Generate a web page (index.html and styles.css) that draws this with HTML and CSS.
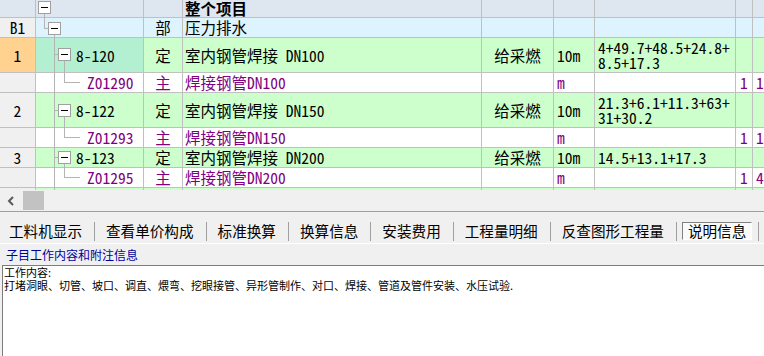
FILE: index.html
```html
<!DOCTYPE html>
<html>
<head>
<meta charset="utf-8">
<link rel="stylesheet" href="styles.css">
</head>
<body>
<div class="grid-wrap">
  <div class="row h18 hdr">
    <div></div><div></div><div></div><div class="l2 bold">整个项目</div><div></div><div></div><div></div><div></div><div></div>
  </div>
  <div class="row h20 grp">
    <div class="rh c">B1</div><div></div><div class="c">部</div><div class="l2">压力排水</div><div></div><div></div><div></div><div></div><div></div>
  </div>
  <div class="row h35 item">
    <div class="sel c">1</div><div class="code cur">8-120</div><div class="c">定</div><div class="l2">室内钢管焊接 DN100</div><div class="c">给采燃</div><div class="l3">10m</div><div class="l3"><span class="expr">4+49.7+48.5+24.8+<br>8.5+17.3</span></div><div></div><div></div>
  </div>
  <div class="row h20 sub">
    <div class="rh"></div><div class="subcode">Z01290</div><div class="c">主</div><div class="l2">焊接钢管DN100</div><div></div><div class="l3">m</div><div></div><div class="c">1</div><div class="l3">1</div>
  </div>
  <div class="row h35 item">
    <div class="rh c">2</div><div class="code">8-122</div><div class="c">定</div><div class="l2">室内钢管焊接 DN150</div><div class="c">给采燃</div><div class="l3">10m</div><div class="l3"><span class="expr">21.3+6.1+11.3+63+<br>31+30.2</span></div><div></div><div></div>
  </div>
  <div class="row h20 sub">
    <div class="rh"></div><div class="subcode">Z01293</div><div class="c">主</div><div class="l2">焊接钢管DN150</div><div></div><div class="l3">m</div><div></div><div class="c">1</div><div class="l3">1</div>
  </div>
  <div class="row h20 item">
    <div class="rh c">3</div><div class="code">8-123</div><div class="c">定</div><div class="l2">室内钢管焊接 DN200</div><div class="c">给采燃</div><div class="l3">10m</div><div class="l3">14.5+13.1+17.3</div><div></div><div></div>
  </div>
  <div class="row h20 sub">
    <div class="rh"></div><div class="subcode">Z01295</div><div class="c">主</div><div class="l2">焊接钢管DN200</div><div></div><div class="l3">m</div><div></div><div class="c">1</div><div class="l3">4</div>
  </div>
  <div class="row h20 item">
    <div class="rh"></div><div></div><div></div><div></div><div></div><div></div><div></div><div></div><div></div>
  </div>
  <svg class="tree" width="150" height="190" viewBox="0 0 150 190">
    <path d="M44.5 13V28.5H48M54.5 34V190M54 54.5H58M64.5 60V82.5H80M54 110.5H58M64.5 116V137.5H80M54 157.5H58M64.5 163V177.5H80" stroke="#b4b4b4" fill="none" shape-rendering="crispEdges"/>
    <g fill="#fff" stroke="#a0a0a0" shape-rendering="crispEdges">
      <rect x="38.5" y="1.5" width="12" height="12"/>
      <rect x="48.5" y="22.5" width="12" height="12"/>
      <rect x="58.5" y="48.5" width="12" height="12"/>
      <rect x="58.5" y="104.5" width="12" height="12"/>
      <rect x="58.5" y="151.5" width="12" height="12"/>
    </g>
    <path d="M41 7.5H48M51 28.5H58M61 54.5H68M61 110.5H68M61 157.5H68" stroke="#000" shape-rendering="crispEdges"/>
  </svg>
</div>
<div class="hscroll">
  <svg width="8" height="10" viewBox="0 0 8 10"><path d="M6 1L2 5L6 9" stroke="#5a5a5a" stroke-width="2" fill="none"/></svg>
  <div class="thumb"></div>
</div>
<div class="tabs">
  <div class="tab">工料机显示</div><div class="sep"></div>
  <div class="tab">查看单价构成</div><div class="sep"></div>
  <div class="tab">标准换算</div><div class="sep"></div>
  <div class="tab">换算信息</div><div class="sep"></div>
  <div class="tab">安装费用</div><div class="sep"></div>
  <div class="tab">工程量明细</div><div class="sep"></div>
  <div class="tab">反查图形工程量</div><div class="sep"></div>
  <div class="tab on">说明信息</div><div class="sep"></div>
</div>
<div class="subhead">子目工作内容和附注信息</div>
<div class="memo">工作内容:<br>打堵洞眼、切管、坡口、调直、煨弯、挖眼接管、异形管制作、对口、焊接、管道及管件安装、水压试验.</div>
</body>
</html>
```
FILE: styles.css
```css
* { box-sizing: border-box; margin: 0; padding: 0; }
html, body { width: 764px; height: 356px; overflow: hidden; }
body { background: #f0f0f0; font-family: "Noto Sans CJK SC", sans-serif; color: #000; display: flex; flex-direction: column; }

.grid-wrap { position: relative; height: 190px; flex: none; overflow: hidden; background: #fff; }
.row {
  display: grid;
  grid-template-columns: 36px 108px 39px 299px 72px 41px 141px 17px 60px;
  width: 813px;
  font-family: "Noto Sans Mono CJK SC", "Noto Sans CJK SC", monospace;
  font-size: 15.5px;
  line-height: 15px;
}
.row > div {
  border-right: 1px solid #c0c0c0;
  border-bottom: 1px solid #c0c0c0;
  display: flex;
  align-items: center;
  white-space: nowrap;
}
.h18 { height: 18px; }
.h20 { height: 20px; }
.h35 { height: 35px; }
.row > .c { justify-content: center; }
.row > .l2 { padding-left: 2px; }
.row > .l3 { padding-left: 3px; }
.row > .code { padding-left: 40px; }
.row > .subcode { padding-left: 51px; }
.bold { font-weight: bold; }
.expr { display: block; }

.hdr > div { background: #dee6ef; }
.grp > div { background: #ddf3fd; }
.item > div { background: #ccffcc; }
.sub > div { background: #fff; color: #800080; }
.row > .rh { background: #f0f0f0; color: #000; }
.row > .sel { background: #ffd28f; }
.row > .cur { background: #b3f0d2; }

.tree { position: absolute; left: 0; top: 0; pointer-events: none; }

.hscroll { height: 22px; flex: none; border-bottom: 1px solid #a0a0a0; display: flex; align-items: center; padding-left: 7px; }
.thumb { width: 21px; height: 19px; background: #c2c2c2; margin-left: 8px; }

.tabs { height: 32px; flex: none; padding: 10px 0 0 3px; display: flex; align-items: flex-start; border-bottom: 1px solid #fff; font-size: 14.6px; }
.tab { height: 18px; line-height: 18px; padding: 0 6px; white-space: nowrap; }
.tab.on { border: 1px solid; border-color: #808080 #ffffff #ffffff #808080; padding: 0 5px; line-height: 16px; background: #fafafa; }
.sep { width: 1px; height: 19px; background: #a0a0a0; margin: 0 5px 0 6px; flex: none; }

.subhead { height: 21px; flex: none; line-height: 21px; padding-left: 6px; font-size: 12px; color: #00009c; }
.memo { flex: 1; margin-left: 2px; background: #fff; border-top: 1px solid #7c7c7c; border-left: 1px solid #7c7c7c; font-size: 11px; line-height: 13px; padding-left: 1px; white-space: nowrap; }
```
